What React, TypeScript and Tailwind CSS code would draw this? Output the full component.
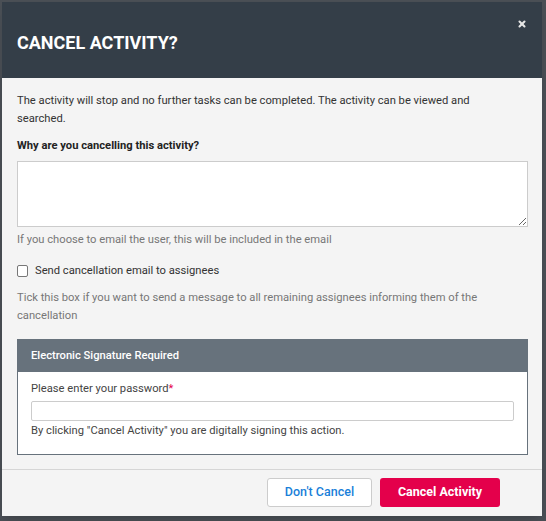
import { X } from 'lucide-react';

export default function App() {
  return (
    <div className="h-[521px] w-[546px] bg-[#4a4f55] pt-[2px] pl-[2px] font-['Roboto',sans-serif]">
      <div className="w-[540px] bg-[#f4f4f4] shadow-lg">
        {/* Header */}
        <div className="relative flex h-[76px] items-center bg-[#343e48] px-[15px]">
          <h2 className="pt-[4px] text-[18px] font-bold text-white">CANCEL ACTIVITY?</h2>
          <button className="absolute right-[15px] top-[17px] text-[#e6e6e6]">
            <X className="h-[10px] w-[10px]" strokeWidth={5} />
          </button>
        </div>

        {/* Body */}
        <div className="px-[15px] pt-[14px] text-[11.2px] leading-[18px] text-[#333]">
          <p className="w-[490px]">
            The activity will stop and no further tasks can be completed. The activity can be viewed and searched.
          </p>
          <label className="mt-[9px] block font-bold text-[#222]">Why are you cancelling this activity?</label>
          <textarea className="mt-[6px] block h-[66px] w-[511px] resize-y border border-[#ccc] bg-white" />
          <p className="mt-[4px] text-[#777]">If you choose to email the user, this will be included in the email</p>

          <label className="mt-[13px] flex items-center gap-[7px] text-[#333]">
            <span className="h-[12px] w-[11px] rounded-[2px] border border-[#777] bg-white" />
            Send cancellation email to assignees
          </label>
          <p className="mt-[9px] text-[#777]">
            Tick this box if you want to send a message to all remaining assignees informing them of the cancellation
          </p>

          {/* Signature panel */}
          <div className="mt-[14px] w-[511px] border border-[#67727c] bg-white">
            <div className="flex h-[32px] items-center bg-[#67727c] px-[13px] font-medium text-white">
              Electronic Signature Required
            </div>
            <div className="px-[13px] pb-[14px] pt-[8px]">
              <div className="text-[#444]">
                Please enter your password<span className="text-[#e4004b]">*</span>
              </div>
              <input type="password" className="mt-[3px] block h-[20px] w-[483px] rounded-[2px] border border-[#ccc] bg-white" />
              <div className="mt-[1px] text-[#444]">By clicking "Cancel Activity" you are digitally signing this action.</div>
            </div>
          </div>
        </div>

        {/* Footer */}
        <div className="mt-[14px] flex justify-end gap-[8px] border-t border-[#d6d6d6] px-[42px] pb-[9px] pt-[8px]">
          <button className="h-[29px] w-[105px] rounded-[3px] border border-[#ccc] bg-white text-[12.5px] font-medium text-[#1a7fd9]">
            Don't Cancel
          </button>
          <button className="h-[29px] w-[120px] rounded-[3px] bg-[#e4004b] text-[12.5px] font-bold text-white">
            Cancel Activity
          </button>
        </div>
      </div>
    </div>
  );
}
